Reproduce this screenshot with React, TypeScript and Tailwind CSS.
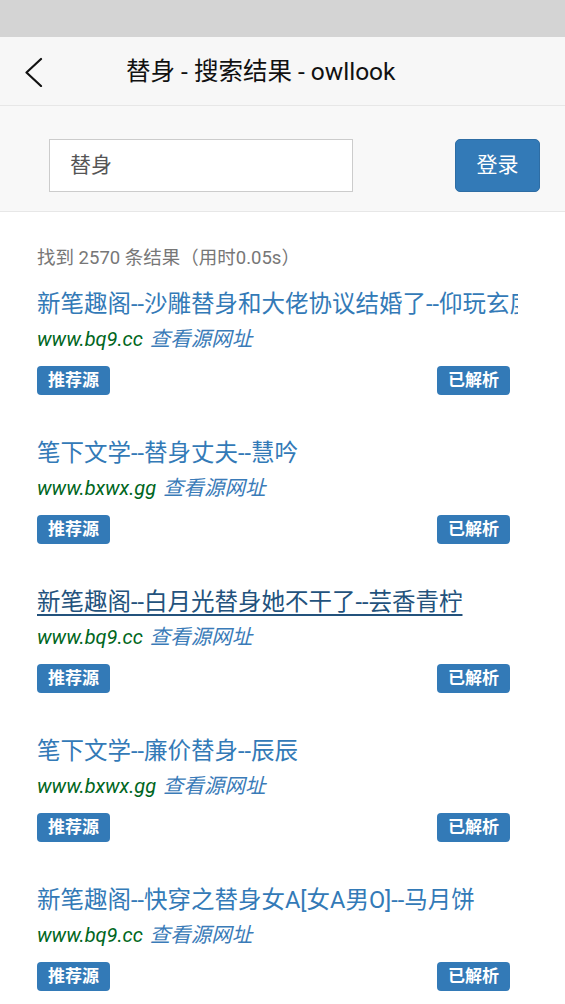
import React from "react";

const items = [
  { title: "新笔趣阁--沙雕替身和大佬协议结婚了--仰玩玄度", url: "www.bq9.cc", hover: false },
  { title: "笔下文学--替身丈夫--慧吟", url: "www.bxwx.gg", hover: false },
  { title: "新笔趣阁--白月光替身她不干了--芸香青柠", url: "www.bq9.cc", hover: true },
  { title: "笔下文学--廉价替身--辰辰", url: "www.bxwx.gg", hover: false },
  { title: "新笔趣阁--快穿之替身女A[女A男O]--马月饼", url: "www.bq9.cc", hover: false },
];

export default function App() {
  return (
    <div
      className="w-[565px] h-[1004px] overflow-hidden bg-white"
      style={{ fontFamily: 'Roboto, "Noto Sans CJK SC", sans-serif' }}
    >
      <div className="h-[37px] bg-[#d4d4d4]" />
      <div className="h-[68px] bg-[#f7f7f7] flex items-center pt-[2px]">
        <div className="w-[126px] pl-[24px] flex items-center">
          <svg width="20" height="30" viewBox="0 0 20 30" fill="none">
            <path d="M17 2 L2.5 15.5 L17 29" stroke="#111" strokeWidth="2.2" strokeLinecap="round" strokeLinejoin="round" />
          </svg>
        </div>
        <div className="text-[24.5px] leading-[30px] text-[#111] whitespace-nowrap">替身 - 搜索结果 - owllook</div>
      </div>
      <div className="h-[107px] bg-[#f8f8f8] border-y border-[#e7e7e7] flex items-start justify-between pt-[33px] pl-[49px] pr-[25px]">
        <div className="w-[304px] h-[53px] bg-white border border-[#ccc] flex items-center pl-[20px] text-[21px] text-[#555]">替身</div>
        <div className="w-[85px] h-[53px] rounded-[5px] bg-[#337ab7] border border-[#2e6da4] text-white text-[21px] flex items-center justify-center">登录</div>
      </div>
      <div className="pl-[37px] w-[518px]">
        <div className="mt-[33px] h-[26px] leading-[26px] text-[18.5px] text-[#777] whitespace-nowrap">找到 2570 条结果（用时0.05s）</div>
        {items.map((it, i) => (
          <div key={i} className={i === 0 ? "mt-[17px]" : "mt-[42px]"}>
            <div
              className={
                "h-[33px] leading-[33px] text-[23.5px] whitespace-nowrap overflow-hidden " +
                (it.hover ? "text-[#23527c] underline underline-offset-[4px] decoration-[1.5px]" : "text-[#337ab7]")
              }
            >
              {it.title}
            </div>
            <div className="h-[36px] leading-[36px] text-[20px] italic whitespace-nowrap">
              <span className="text-[#006621]">{it.url}</span>{" "}
              <span className="text-[#3a7bb8] ml-[2px] text-[20.5px]">查看源网址</span>
            </div>
            <div className="mt-[9px] flex justify-between pr-[8px]">
              <span className="h-[29px] px-[11px] rounded-[4px] bg-[#337ab7] text-white font-bold text-[17px] leading-[29px]">推荐源</span>
              <span className="h-[29px] px-[11px] rounded-[4px] bg-[#337ab7] text-white font-bold text-[17px] leading-[29px]">已解析</span>
            </div>
          </div>
        ))}
      </div>
    </div>
  );
}
